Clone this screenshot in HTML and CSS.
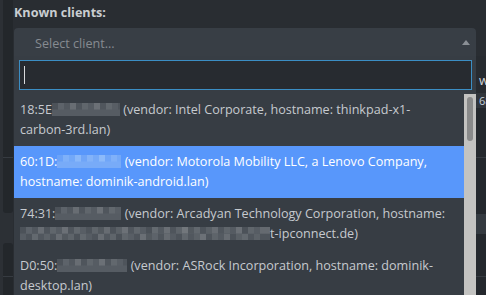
FILE: index.html
```html
<!DOCTYPE html>
<html lang="en">
  <head>
    <meta charset="utf-8" />
    <title>Known clients</title>
    <link rel="stylesheet" href="styles.css">
  </head>
  <body>
    <div class="shell">
      <aside class="rail">
        <div class="rail-block rail-top"><div class="rail-line rail-line-top"></div></div>
        <div class="rail-block rail-bottom"><div class="rail-line rail-line-bottom"></div></div>
      </aside>

      <main class="dialog">
        <label class="field-label">Known clients:</label>

        <div class="picker">
          <div class="picker-head">
            <span class="picker-placeholder">Select client...</span>
            <span class="picker-arrow"></span>
          </div>

          <div class="picker-drop">
            <div class="search">
              <div class="search-box"><span class="caret"></span></div>
            </div>
            <div class="results">
              <ul class="options">
                <li class="option">18:5E<span class="blur blur-1"></span> (vendor: Intel Corporate, hostname: thinkpad-x1-carbon-3rd.lan)</li>
                <li class="option option-active">60:1D:<span class="blur blur-2"></span> (vendor: Motorola Mobility LLC, a Lenovo Company, hostname: dominik-android.lan)</li>
                <li class="option">74:31:<span class="blur blur-3"></span> (vendor: Arcadyan Technology Corporation, hostname: <span class="blur blur-long"></span>t-ipconnect.de)</li>
                <li class="option">D0:50:<span class="blur blur-4"></span> (vendor: ASRock Incorporation, hostname: dominik-desktop.lan)</li>
              </ul>
              <div class="scrollbar"><div class="scrollbar-thumb"></div></div>
            </div>
          </div>
        </div>

        <div class="backdrop">
          <div class="back-row back-row-a"><span class="back-text">w</span></div>
          <div class="back-row back-row-b"><span class="back-num">68</span></div>
          <div class="back-row back-row-c"></div>
          <div class="back-row back-row-d"></div>
          <div class="back-row back-row-e"></div>
          <div class="back-row back-row-f"></div>
          <div class="back-row back-row-g"></div>
        </div>
      </main>
    </div>
  </body>
</html>
```

FILE: styles.css
```css
html {
  --highlight: #5897fb;
  --text: #c6cacf;
}

body {
  margin: 0;
  padding: 0;
  background-color: #2c3035;
  font-family: "Open Sans", "Noto Sans", sans-serif;
  font-size: 12.6px;
  color: var(--text);
  overflow: hidden;
}

.shell {
  display: grid;
  grid-template-columns: 10px 1fr;
  padding-left: 3px;
  height: 295px;
}

/* dark strip of the page behind the dialog */
.rail {
  display: flex;
  flex-direction: column;
  gap: 30px;
}

.rail-block {
  background-color: #23272b;
}

.rail-top {
  height: 213px;
  border-radius: 0 0 3px 3px;
}

.rail-bottom {
  flex: 1;
  border-radius: 3px 3px 0 0;
}

.rail-line {
  height: 1px;
  background-color: #363b41;
}

.rail-line-top {
  margin-top: 157px;
}

.rail-line-bottom {
  margin-top: 33px;
}

.dialog {
  background-color: #292d32;
  padding-left: 1px;
  overflow: hidden;
}

.field-label {
  display: block;
  margin-top: 3px;
  margin-bottom: 5px;
  line-height: 20px;
  font-weight: bold;
  color: #cacdd1;
}

.picker {
  position: relative;
  width: 462px;
}

.picker-head {
  display: flex;
  align-items: flex-start;
  justify-content: space-between;
  height: 28px;
  box-sizing: border-box;
  padding: 4px 6px 0 21px;
  line-height: 24px;
  background-color: #383e45;
  border-radius: 4px 4px 0 0;
}

.picker-placeholder {
  color: #868b91;
}

.picker-arrow {
  margin-top: 8px;
  width: 0;
  height: 0;
  border-left: 4px solid transparent;
  border-right: 4px solid transparent;
  border-bottom: 5px solid #8a8f95;
}

/* open dropdown lies over the form below */
.picker-drop {
  position: absolute;
  top: 28px;
  left: 0;
  right: 0;
  z-index: 2;
  background-color: #373d44;
}

.search {
  padding: 4px 4px 4px 5px;
}

.search-box {
  height: 30px;
  box-sizing: border-box;
  border: 1px solid #3b8ec4;
  background-color: #272b30;
  padding: 5px 0 0 4px;
}

.caret {
  display: block;
  width: 1px;
  height: 18px;
  background-color: #d8dadc;
}

.results {
  display: flex;
  height: 201px;
  overflow: hidden;
}

.options {
  flex: 1;
  list-style-type: none;
  margin: 0;
  padding: 0;
}

.option {
  padding: 6px 12px 6px 6px;
  line-height: 20px;
}

.option-active {
  background-color: var(--highlight);
  color: #ffffff;
}

.scrollbar {
  width: 12px;
  background-color: #c3c3c1;
  padding-top: 3px;
}

.scrollbar-thumb {
  margin: 0 3px;
  height: 44px;
  border-radius: 3px;
  background-color: #898a8a;
}

/* pixelated parts of MAC addresses */
.blur {
  display: inline-block;
  height: 13px;
  vertical-align: -2px;
  background-repeat: no-repeat;
  background-size: 100% 50%, 100% 50%;
  background-position: top, bottom;
  background-image:
    linear-gradient(to right, #4c5259 0 6px, #5d636a 6px 12px, #52585f 12px 18px, #686d73 18px 24px, #4f555c 24px 30px, #60666c 30px 36px, #565c63 36px 42px, #6b7076 42px 48px, #50565d 48px 54px, #62686e 54px 60px, #585e65 60px 66px, #4e545b 66px);
  background-color: #565c63;
}

.blur-1 {
  width: 68px;
}

.blur-2 {
  width: 64px;
  background-image:
    linear-gradient(to right, #6aa2f8 0 6px, #7eb0f9 6px 12px, #72a8f8 12px 18px, #89b8fa 18px 24px, #6fa5f8 24px 30px, #83b3f9 30px 36px, #76aaf8 36px 42px, #8cbafa 42px 48px, #70a6f8 48px 54px, #80b1f9 54px 60px, #74a9f8 60px);
  background-color: #78abf8;
}

.blur-3 {
  width: 66px;
}

.blur-4 {
  width: 70px;
}

.blur-long {
  width: 250px;
  margin-left: 0;
  background-image:
    linear-gradient(to right, #4c5259 0 6px, #5d636a 6px 12px, #52585f 12px 18px, #686d73 18px 24px, #4f555c 24px 30px, #60666c 30px 36px, #565c63 36px 42px, #6b7076 42px 48px, #50565d 48px 54px, #62686e 54px 60px, #585e65 60px 66px, #4e545b 66px 72px, #5f656b 72px 78px, #53595f 78px 84px, #676c72 84px 90px, #4d535a 90px 96px, #5b6167 96px 102px, #6c7177 102px 108px, #51575e 108px 114px, #61676d 114px 120px, #575d64 120px 126px, #4b5158 126px 132px, #646a70 132px 138px, #545a61 138px 144px, #6a6f75 144px 150px, #4f555c 150px 156px, #5e646a 156px 162px, #72777c 162px 168px, #53595f 168px 174px, #62686e 174px 180px, #4e545b 180px 186px, #5a6066 186px 192px, #686d73 192px 198px, #50565d 198px 204px, #5f656b 204px 210px, #555b62 210px 216px, #6b7076 216px 222px, #4c5259 222px 228px, #60666c 228px 234px, #575d64 234px 240px, #656a70 240px),
    linear-gradient(to right, #575d64 0 6px, #4d535a 6px 12px, #63696f 12px 18px, #51575e 18px 24px, #5c6268 24px 30px, #4f555c 30px 36px, #676c72 36px 42px, #53595f 42px 48px, #5e646a 48px 54px, #4c5259 54px 60px, #62686e 60px 66px, #565c63 66px 72px, #4e545b 72px 78px, #686d73 78px 84px, #52585f 84px 90px, #5f656b 90px 96px, #4b5158 96px 102px, #60666c 102px 108px, #585e65 108px 114px, #4e545b 114px 120px, #6a6f75 120px 126px, #53595f 126px 132px, #5d636a 132px 138px, #4f555c 138px 144px, #656a70 144px 150px, #565c63 150px 156px, #4d535a 156px 162px, #61676d 162px 168px, #51575e 168px 174px, #5b6167 174px 180px, #6c7177 180px 186px, #4e545b 186px 192px, #5e646a 192px 198px, #545a61 198px 204px, #676c72 204px 210px, #4c5259 210px 216px, #5a6066 216px 222px, #63696f 222px 228px, #50565d 228px 234px, #5c6268 234px 240px, #4e545b 240px);
}

/* form rows hidden under the dropdown, visible only at the right edge */
.backdrop {
  width: 480px;
}

.back-row {
  background-color: #24282d;
  padding-left: 465px;
  overflow: hidden;
  white-space: nowrap;
}

.back-row-a {
  height: 37px;
  background-color: #272b30;
  line-height: 50px;
}

.back-text {
  color: #d2d6da;
}

.back-row-b {
  height: 15px;
  background-color: #30353b;
  font-size: 11px;
  line-height: 15px;
}

.back-num {
  color: #c5d0dc;
}

.back-row-c {
  height: 49px;
  border-bottom: 1px solid #363b41;
}

.back-row-d {
  height: 56px;
}

.back-row-e {
  height: 20px;
  background-color: #343a40;
}

.back-row-f {
  height: 42px;
  border-bottom: 1px solid #363b41;
}

.back-row-g {
  height: 30px;
}
```
